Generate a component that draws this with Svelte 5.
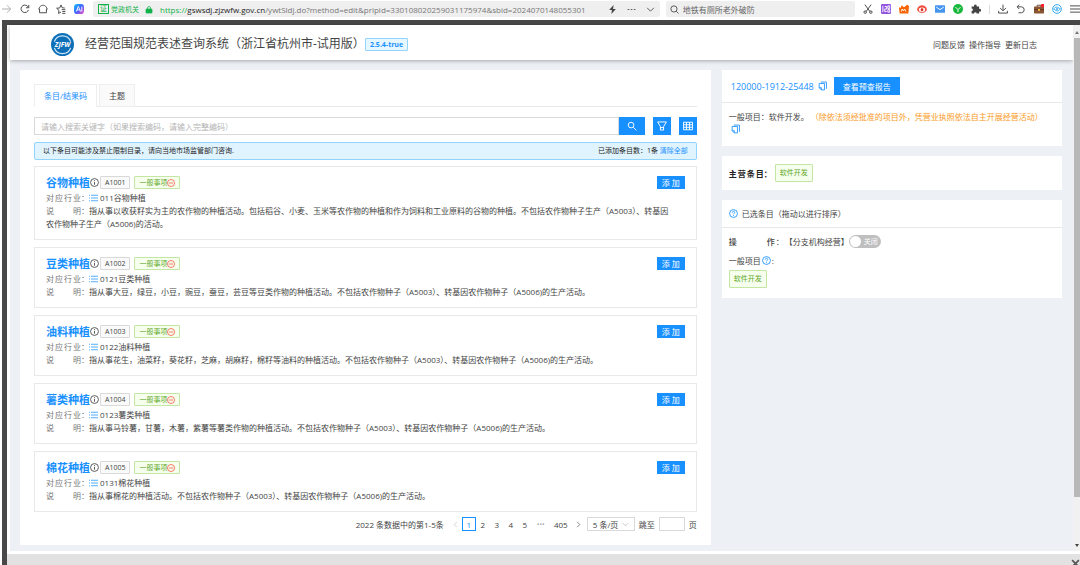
<script>
  const code = '120000-1912-25448';

  let tab      = $state('code');
  let keyword  = $state('');
  let page     = $state(1);
  let pageSize = $state('5');
  let jump     = $state('');
  let branch   = $state(false);
  let webQuery = $state('地铁有厕所老外破防');

  const items = [
    { name: '谷物种植', code: 'A1001', industry: '011谷物种植', desc: '指从事以收获籽实为主的农作物的种植活动。包括稻谷、小麦、玉米等农作物的种植和作为饲料和工业原料的谷物的种植。不包括农作物种子生产（A5003）、转基因农作物种子生产（A5006)的活动。' },
    { name: '豆类种植', code: 'A1002', industry: '0121豆类种植', desc: '指从事大豆，绿豆，小豆，豌豆，蚕豆，芸豆等豆类作物的种植活动。不包括农作物种子（A5003）、转基因农作物种子（A5006)的生产活动。' },
    { name: '油料种植', code: 'A1003', industry: '0122油料种植', desc: '指从事花生，油菜籽，葵花籽，芝麻，胡麻籽，棉籽等油料的种植活动。不包括农作物种子（A5003）、转基因农作物种子（A5006)的生产活动。' },
    { name: '薯类种植', code: 'A1004', industry: '0123薯类种植', desc: '指从事马铃薯，甘薯，木薯，紫薯等薯类作物的种植活动。不包括农作物种子（A5003）、转基因农作物种子（A5006)的生产活动。' },
    { name: '棉花种植', code: 'A1005', industry: '0131棉花种植', desc: '指从事棉花的种植活动。不包括农作物种子（A5003）、转基因农作物种子（A5006)的生产活动。' },
  ];
  const pages = [1, 2, 3, 4, 5];
</script>

{#snippet copyIcon()}
  <svg class="copy" viewBox="0 0 16 16" aria-hidden="true">
    <path d="M5 1h10v12M2 3.500h9.500V15H6l-4-4zM2 11h4v4" />
  </svg>
{/snippet}

{#snippet helpIcon()}
  <svg class="help" viewBox="0 0 16 16" aria-hidden="true">
    <circle cx="8" cy="8" r="7" />
    <path d="M5.8 6.4c0-3 4.4-2.900 4.400-.2 0 1.700-2.200 1.700-2.200 3.300M8 11v1.500" />
  </svg>
{/snippet}

<div class="shell">
  <!-- Browser toolbar -->
  <div class="toolbar">
    <div class="tools nav">
      <svg viewBox="0 0 16 16" class="pale"><path d="M0 8h13M8 2l6 6-6 6" /></svg>
      <svg viewBox="0 0 16 16"><path d="M13.500 9.500A6 6 0 1 1 12 3.500l2 2M14 1.500v4.500h-4.500" /></svg>
      <svg viewBox="0 0 16 16"><path d="M2.500 7.500V14h11V7.500M1 8.500C3 3 6 2 8 2s5 1 7 6.500" /></svg>
      <svg viewBox="0 0 16 16"><path d="M8 13l-4 2 .8-4.700L1 6.800l5-.5L8 1.500l2 4.500 4 .5M9 9h6M10 12h5M10 15h5" /></svg>
      <svg viewBox="0 0 16 16">
        <defs>
          <linearGradient id="ai" x1="0" y1="0" x2="1" y2="1">
            <stop offset="0" stop-color="#16c8ff" /><stop offset=".5" stop-color="#3a62ff" /><stop offset="1" stop-color="#ff4cc3" />
          </linearGradient>
        </defs>
        <rect x="0" y="0" width="16" height="16" rx="5" fill="url(#ai)" stroke="none" />
        <path d="M3.500 12L7 4l3.500 8M5 9.500h4M12.500 4v8" stroke="#fff" />
      </svg>
    </div>

    <div class="address">
      <span class="cert">证</span>
      <span class="gov">党政机关</span>
      <svg class="lock" viewBox="0 0 16 16" aria-hidden="true"><rect x="2" y="7" width="12" height="8" rx="1" /><path d="M5 7V5a3 3 0 0 1 6 0v2" /></svg>
      <div class="url"><span class="scheme">https://</span><b>gswsdj.zjzwfw.gov.cn</b>/ywtSldj.do?method=edit&amp;pripid=330108020259031175974&amp;sbid=2024070148055301</div>
      <svg class="glyph" viewBox="0 0 16 16"><path d="M10 0L2 9h5l-1 7 8-9H9z" fill="#444" stroke="none" /></svg>
      <svg class="glyph" viewBox="0 0 16 16"><path d="M1 8h3M6.500 8h3M12 8h3" /></svg>
      <svg class="glyph" viewBox="0 0 16 16"><path d="M2 5l6 6 6-6" /></svg>
    </div>

    <label class="web-search">
      <svg class="glyph" viewBox="0 0 16 16" aria-hidden="true"><circle cx="7" cy="7" r="5.500" /><path d="M11 11l4 4" /></svg>
      <input type="text" aria-label="搜索" bind:value={webQuery}>
    </label>

    <div class="tools ext">
      <svg viewBox="0 0 16 16"><path d="M3 1l8 11M13 1L5 12" /><circle cx="3.500" cy="13" r="2" /><circle cx="12.500" cy="13" r="2" /></svg>
      <svg viewBox="0 0 16 16"><rect width="16" height="16" rx="2" fill="#9254de" stroke="none" /><path d="M3 3v10M6 4h3v4H6v4h3M11 3h3v4h-3zM11 9h3v4h-3z" stroke="#fff" /></svg>
      <svg viewBox="0 0 16 16"><path d="M1 15L0 5l3 1 1-4 4 3 5-4 3 2-1 12z" fill="#fa6400" stroke="none" /><path d="M4 12l1-4 2 3 2-3 2 4" stroke="#fff" /></svg>
      <svg viewBox="0 0 16 16"><path d="M0 9c1-5 5-7 8-7s7 2 8 7c-2 4-5 5-8 5s-6-1-8-5z" fill="#f04c3c" stroke="none" /><ellipse cx="8" cy="9" rx="5" ry="3.500" fill="#fff" stroke="none" /><circle cx="8" cy="9" r="2.200" fill="#d52b1e" stroke="none" /></svg>
      <svg viewBox="0 0 16 16"><rect x="0" y="2" width="16" height="12" rx="1" fill="#4595ee" stroke="none" /><path d="M2 5l6 4 6-4" stroke="#fff" /></svg>
      <svg viewBox="0 0 16 16"><circle cx="8" cy="8" r="8" fill="#17b83c" stroke="none" /><path d="M4 5l4 4 4-4M8 9v4" stroke="#fff" /></svg>
      <svg viewBox="0 0 16 16"><path d="M1 4h4a2.200 2.200 0 1 1 4 0h4v4a2.200 2.200 0 1 1 0 4v3H9a2 2 0 0 0-4 0H1v-4a2 2 0 0 0 0-4z" fill="#444" stroke="none" /></svg>
      <i class="bar"></i>
      <svg viewBox="0 0 16 16"><path d="M8 1v9M3.500 6.500L8 11l4.500-4.500M1 11v3.500h14V11" /></svg>
      <svg viewBox="0 0 16 16"><path d="M5 1L2 4.500 5 8M2 4.500h7a4.800 4.800 0 0 1 0 9.500H4" /></svg>
      <svg viewBox="0 0 16 16"><path d="M5 5V2h6v3" stroke="#6b3f26" /><rect y="4" width="16" height="11" rx="1" fill="#8a5436" stroke="none" /><path d="M0 9h16" stroke="#5d3520" /><rect x="6.500" y="8" width="3" height="3" fill="#ffc53d" stroke="none" /><circle cx="14" cy="2.500" r="3" fill="#f5222d" stroke="none" /></svg>
      <svg viewBox="0 0 16 16"><circle cx="8" cy="8" r="7" stroke="#2aa4f4" /><path d="M3 9c0-5 8-5 9-1M13 7c0 5-8 5-9 1" stroke="#2aa4f4" /><circle cx="8" cy="8" r="1.500" fill="#2aa4f4" stroke="none" /></svg>
      <svg viewBox="0 0 16 16"><path d="M0 3h16M0 8h16M0 13h16" /></svg>
    </div>
  </div>

  <div class="frame">
    <div class="viewport">
      <div class="content">
        <header>
          <svg class="logo" viewBox="0 0 48 48" aria-hidden="true">
            <circle cx="24" cy="24" r="24" fill="#0c6fb8" />
            <path d="M7 18a18 18 0 0 1 34 0M7 31a18 18 0 0 0 34 0" fill="none" stroke="#d3e8f7" stroke-width="2.500" />
            <text x="24" y="29" text-anchor="middle" font-size="14" font-weight="700" font-style="italic" fill="#fff">ZJFW</text>
          </svg>
          <h1>经营范围规范表述查询系统（浙江省杭州市-试用版）</h1>
          <span class="version">2.5.4-true</span>
          <nav>
            <a href="#feedback">问题反馈</a>
            <a href="#guide">操作指导</a>
            <a href="#changelog">更新日志</a>
          </nav>
        </header>

        <main>
          <section class="panel results">
            <div class="tabs" role="tablist">
              <button role="tab" class:active={tab === 'code'} aria-selected={tab === 'code'} onclick={() => tab = 'code'}>条目/结果码</button>
              <button role="tab" class:active={tab === 'topic'} aria-selected={tab === 'topic'} onclick={() => tab = 'topic'}>主题</button>
            </div>

            <div class="search">
              <input type="text" aria-label="搜索关键字" placeholder="请输入搜索关键字（如果搜索编码，请输入完整编码）" bind:value={keyword}>
              <button class="primary go" aria-label="搜索">
                <svg viewBox="0 0 16 16"><circle cx="6.500" cy="6.500" r="4.500" /><path d="M10 10l5 5" /></svg>
              </button>
              <button class="primary square" aria-label="筛选">
                <svg viewBox="0 0 16 16"><path d="M1 1.500h14L10.500 9v5.500h-5V9zM5.500 10.500h5" /></svg>
              </button>
              <button class="primary square" aria-label="表格">
                <svg viewBox="0 0 16 16"><path d="M.7 2h14.600v12H.7zM1 6h14M1 10h14M5.500 2v12M10.500 2v12" /></svg>
              </button>
            </div>

            <div class="notice">
              <span>以下条目可能涉及禁止限制目录，请向当地市场监管部门咨询.</span>
              <span>已添加条目数：1条 <a href="#clear">清除全部</a></span>
            </div>

            <div class="list">
              {#each items as item (item.code)}
                <article>
                  <div class="head">
                    <h2>{item.name}</h2>
                    <svg class="info" viewBox="0 0 16 16" aria-hidden="true"><circle cx="8" cy="8" r="7" /><path d="M8 3.800v1.700M8 7v5" /></svg>
                    <span class="tag">{item.code}</span>
                    <span class="tag green">一般事项
                      <svg viewBox="0 0 16 16" aria-hidden="true"><circle cx="8" cy="8" r="7" /><path d="M4 8h8" /></svg>
                    </span>
                    <button class="primary add">添 加</button>
                  </div>
                  <p>
                    <span class="label">对应行业</span><span class="colon">：</span><svg class="lines" viewBox="0 0 18 16" aria-hidden="true"><path d="M0 2.500h2M4 2.500h14M0 8h2M4 8h14M0 13.500h2M4 13.500h14" /></svg>{item.industry}
                  </p>
                  <p><span class="label">说明</span><span class="colon">：</span>{item.desc}</p>
                </article>
              {/each}
            </div>

            <div class="pager">
              <span class="total">2022 条数据中的第1-5条</span>
              <button class="arrow" aria-label="上一页" disabled={page === 1} onclick={() => page--}>
                <svg viewBox="0 0 16 16"><path d="M11 2L5 8l6 6" /></svg>
              </button>
              {#each pages as n}
                <button class:current={n === page} onclick={() => page = n}>{n}</button>
              {/each}
              <span class="dots">•••</span>
              <button class="last" onclick={() => page = 405}>405</button>
              <button class="arrow" aria-label="下一页" onclick={() => page++}>
                <svg viewBox="0 0 16 16"><path d="M5 2l6 6-6 6" /></svg>
              </button>
              <span class="size">
                <select aria-label="每页条数" bind:value={pageSize}>
                  <option value="5">5 条/页</option>
                  <option value="10">10 条/页</option>
                  <option value="20">20 条/页</option>
                </select>
                <svg viewBox="0 0 16 16" aria-hidden="true"><path d="M2 5l6 6 6-6" /></svg>
              </span>
              <label>跳至 <input type="text" bind:value={jump}> 页</label>
            </div>
          </section>

          <aside>
            <section class="panel">
              <div class="bar-head report">
                <span class="number">{code}</span>
                {@render copyIcon()}
                <button class="primary view">查看预查报告</button>
              </div>
              <div class="scope">
                一般项目：软件开发。 <em>（除依法须经批准的项目外，凭营业执照依法自主开展经营活动）</em>
                <div class="copy-row">{@render copyIcon()}</div>
              </div>
            </section>

            <section class="panel main-item">
              <strong class="label">主营条目</strong><strong class="colon">：</strong>
              <span class="pick">软件开发</span>
            </section>

            <section class="panel">
              <div class="bar-head">
                {@render helpIcon()}
                <span>已选条目（拖动以进行排序）</span>
              </div>
              <div class="chosen">
                <div class="row">
                  <b class="op">操作</b><span class="colon">：</span>
                  <label class="switch">
                    【分支机构经营】
                    <input type="checkbox" role="switch" bind:checked={branch}>
                    <span class="track" class:on={branch}>{branch ? '开启' : '关闭'}</span>
                  </label>
                </div>
                <div class="row">一般项目 {@render helpIcon()}:</div>
                <span class="pick">软件开发</span>
              </div>
            </section>
          </aside>
        </main>
      </div>

      <div class="scrollbar" aria-hidden="true">
        <i class="up"></i>
        <i class="thumb"></i>
        <i class="down"></i>
      </div>
    </div>

    <footer>
      <button aria-label="关闭">
        <svg viewBox="0 0 16 16"><path d="M2 2l12 12M14 2L2 14" /></svg>
      </button>
    </footer>
  </div>
</div>

<style>
  :global(body) {
    background: #fff;
    overflow: hidden;
  }
  .shell {
    --blue: #1890ff;
    --line: #e8e8e8;
    min-height: 100vh;
    display: flex;
    flex-direction: column;
    font: 8px/13px "Open Sans", "Noto Sans CJK SC", sans-serif;
    color: #444;
  }
  .shell :global(*) { box-sizing: border-box; }
  h1, h2, p { margin: 0; font-weight: 400; }
  a { color: var(--blue); text-decoration: none; }
  button, input, select {
    font: inherit;
    color: inherit;
    margin: 0;
    padding: 0;
    border: none;
    border-radius: 0;
    background: none;
    outline: none;
    min-width: 0;
  }
  button { cursor: pointer; }
  svg {
    flex: none;
    fill: none;
    stroke: currentColor;
    stroke-width: 1.5;
  }

  /* ── Browser toolbar ── */
  .toolbar {
    display: flex;
    align-items: center;
    height: 20px;
    padding-bottom: 2px;
    background: #fff;
  }
  .tools {
    display: flex;
    align-items: center;
    flex: none;
    gap: 8px;
  }
  .tools svg { width: 10px; height: 10px; }
  .nav { padding: 0 9px 0 2px; }
  .ext { padding-left: 8px; }
  .pale { color: #aaa; }
  .bar { width: 1px; height: 9px; background: #ddd; }
  .address, .web-search {
    display: flex;
    align-items: center;
    height: 16px;
    background: #efefef;
    border-radius: 2px;
  }
  .address {
    flex: 568 1 0;
    min-width: 0;
    padding: 0 5px;
  }
  .cert {
    border: 1px solid #12b24b;
    color: #12b24b;
    font-size: 7px;
    line-height: 8px;
    padding: 0 1px;
  }
  .gov { color: #12b24b; font-size: 7px; margin-left: 2px; }
  .lock { width: 8px; height: 9px; margin: 0 7px 0 6px; color: #12b24b; }
  .lock rect { fill: #12b24b; }
  .url {
    flex: 1;
    overflow: hidden;
    white-space: nowrap;
    color: #777;
  }
  .url b { color: #222; font-weight: 400; }
  .url .scheme { color: #12b24b; }
  .glyph { width: 9px; height: 9px; }
  .address .glyph { margin-left: 10px; }
  .web-search {
    flex: 185 1 0;
    margin-left: 6px;
    padding: 0 4px;
    gap: 4px;
  }
  .web-search input { flex: 1; color: #666; }

  /* ── Page frame ── */
  .frame {
    flex: 1;
    display: flex;
    flex-direction: column;
    margin-left: 2px;
    border-top: 5px solid #484848;
    border-left: 5px solid #484848;
  }
  .viewport { flex: 1; display: flex; }
  .content {
    flex: 1;
    min-width: 0;
    display: flex;
    flex-direction: column;
    background: #edf0f5;
    border-left: 3px solid #fff;
  }
  header {
    display: flex;
    align-items: center;
    height: 35px;
    padding: 3px 36px 0 41px;
    background: #fff;
    box-shadow: 0 1px 4px rgba(0, 0, 0, 0.3);
  }
  .logo { width: 23px; height: 23px; stroke: none; }
  h1 {
    margin-left: 11px;
    font-size: 12px;
    line-height: 18px;
  }
  .version {
    padding: 0 4px;
    border: 1px solid #91d5ff;
    border-radius: 1px;
    background: #e6f7ff;
    color: var(--blue);
    font-size: 7px;
    font-weight: 700;
    line-height: 11px;
  }
  nav { display: flex; gap: 4px; margin-left: auto; }
  nav a { color: #444; }

  main {
    display: grid;
    grid-template-columns: 67fr 33fr;
    align-items: start;
    gap: 11px;
    padding: 10px 11px 6px 10px;
  }
  .panel { background: #fff; }
  .results { padding: 14px; }
  .primary {
    display: inline-flex;
    align-items: center;
    justify-content: center;
    background: var(--blue);
    color: #fff;
  }

  /* ── Tabs and search ── */
  .tabs {
    display: flex;
    gap: 2px;
    border-bottom: 1px solid var(--line);
  }
  .tabs button {
    height: 23px;
    margin-bottom: -1px;
    padding: 0 9px;
    border: 1px solid #eee;
    background: #fafafa;
  }
  .tabs .active {
    border-bottom-color: #fff;
    background: #fff;
    color: var(--blue);
  }
  .search { display: flex; margin-top: 10px; }
  .search input {
    flex: 1;
    height: 18px;
    padding: 0 6px;
    border: 1px solid #d9d9d9;
  }
  .search input::placeholder { color: #b5b5b5; }
  .search svg { width: 10px; height: 10px; }
  .go { width: 26px; }
  .square { width: 18px; margin-left: 8px; }
  .notice {
    display: flex;
    justify-content: space-between;
    margin-top: 7px;
    padding: 0 8px;
    border: 1px solid #91d5ff;
    border-radius: 2px;
    background: #e0f4ff;
    color: #222;
    font-size: 7px;
    line-height: 16px;
  }

  /* ── Result list ── */
  .list {
    display: grid;
    gap: 7px;
    margin-top: 6px;
  }
  article {
    padding: 7px 11px 9px;
    border: 1px solid var(--line);
  }
  article p { padding-right: 10px; }
  .head { display: flex; align-items: center; height: 17px; }
  .head h2 {
    color: var(--blue);
    font-size: 11px;
    font-weight: 700;
    line-height: 17px;
  }
  .info { width: 9px; height: 9px; margin-right: 1px; }
  .tag {
    display: inline-flex;
    align-items: center;
    padding: 0 4px;
    border: 1px solid #d9d9d9;
    border-radius: 1px;
    background: #fafafa;
    font-size: 7px;
    line-height: 11px;
  }
  .green, .pick {
    border: 1px solid #c3e6a3;
    border-radius: 1px;
    background: #f6ffed;
    color: #62a82a;
  }
  .green { margin-left: 4px; }
  .tag svg { width: 8px; height: 8px; color: #f5503c; }
  .add { width: 28px; height: 13px; margin-left: auto; line-height: 13px; }
  .label {
    display: inline-block;
    width: 35px;
    text-align-last: justify;
  }
  p .label, p .colon { color: #777; }
  .lines { width: 9px; height: 8px; margin-right: 2px; color: var(--blue); vertical-align: -1px; }

  /* ── Pagination ── */
  .pager {
    display: flex;
    align-items: center;
    justify-content: flex-end;
    margin-top: 5px;
  }
  .total { margin-right: 5px; }
  .pager button {
    width: 14px;
    height: 14px;
    text-align: center;
  }
  .pager .current { border: 1px solid var(--blue); color: var(--blue); }
  .pager .last { width: 22px; }
  .pager svg { width: 7px; height: 7px; }
  .pager .arrow { width: 13px; }
  .pager .arrow:disabled { color: #bbb; }
  .dots { width: 18px; text-align: center; color: #aaa; font-size: 7px; }
  .size { position: relative; margin: 0 4px 0 2px; }
  .size select {
    appearance: none;
    display: block;
    width: 48px;
    height: 14px;
    padding: 0 5px;
    border: 1px solid #d9d9d9;
  }
  .size svg { position: absolute; right: 6px; top: 4px; color: #aaa; pointer-events: none; }
  .pager label { display: flex; align-items: center; gap: 4px; }
  .pager label input { width: 26px; height: 14px; border: 1px solid #d9d9d9; }

  /* ── Side column ── */
  aside { display: grid; gap: 10px; }
  .bar-head {
    display: flex;
    align-items: center;
    gap: 4px;
    height: 28px;
    padding: 0 7px;
    border-bottom: 1px solid var(--line);
  }
  .report { height: 33px; padding: 0 9px; }
  .number { color: var(--blue); font-size: 9px; }
  .copy { width: 9px; height: 10px; color: var(--blue); vertical-align: -1px; }
  .help { width: 9px; height: 9px; color: var(--blue); }
  .view { height: 18px; margin-left: 3px; padding: 0 9px; }
  .scope { padding: 7px 7px 10px; }
  .scope em { color: #fa9a26; font-style: normal; }
  .copy-row { padding-left: 2px; }
  .main-item {
    display: flex;
    align-items: center;
    height: 34px;
    padding: 0 7px;
  }
  .main-item strong { color: #222; }
  .pick {
    display: inline-block;
    padding: 0 4px;
    font-size: 7px;
    line-height: 16px;
  }
  .main-item .pick { margin-left: 3px; }
  .chosen { padding: 4px 7px 10px; }
  .row { display: flex; align-items: center; height: 19px; gap: 1px; }
  .op { width: 46px; text-align-last: justify; font-weight: 500; }
  .switch { display: flex; align-items: center; }
  .switch input { position: absolute; opacity: 0; }
  .track {
    display: flex;
    align-items: center;
    width: 32px;
    height: 13px;
    padding: 0 1px;
    border-radius: 7px;
    background: #bfbfbf;
    color: #fff;
    font-size: 7px;
    gap: 3px;
  }
  .track::before {
    content: "";
    width: 11px;
    height: 11px;
    border-radius: 50%;
    background: #fff;
  }
  .track.on { background: var(--blue); flex-direction: row-reverse; }

  /* ── Scrollbar and bottom strip ── */
  .scrollbar {
    flex: none;
    display: flex;
    flex-direction: column;
    align-items: center;
    width: 7px;
    padding: 6px 0 4px;
    background: #f1f1f1;
  }
  .up, .down {
    border: 2px solid transparent;
  }
  .up { border-top: none; border-bottom: 3px solid #777; margin-bottom: 4px; }
  .down { border-bottom: none; border-top: 3px solid #444; margin-top: auto; }
  .thumb { width: 6px; flex: 0 1 89%; background: #b8b8b8; }
  footer {
    display: flex;
    justify-content: flex-end;
    height: 14px;
    border-top: 3px solid #fff;
    background: #e2e2e2;
  }
  footer button { height: 11px; overflow: hidden; }
  footer svg { display: block; width: 9px; height: 9px; margin-top: 5px; color: #555; stroke-width: 3; }
</style>
